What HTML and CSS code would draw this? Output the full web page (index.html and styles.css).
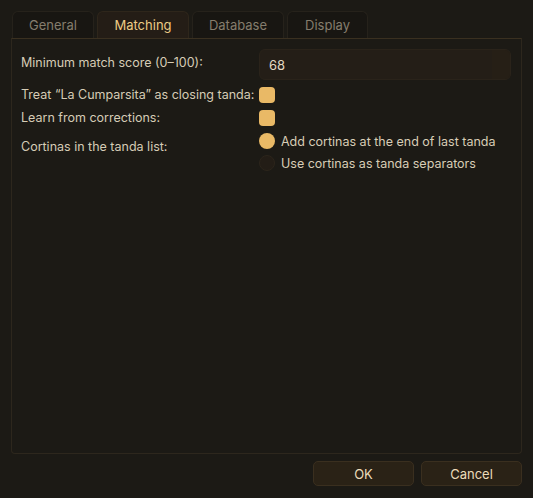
FILE: index.html
```html
<!DOCTYPE html>
<html>
<head>
<meta charset="utf-8">
<link rel="stylesheet" href="styles.css">
</head>
<body>
<div class="dialog">
  <div class="tabs">
    <div class="tab">General</div>
    <div class="tab active">Matching</div>
    <div class="tab">Database</div>
    <div class="tab">Display</div>
  </div>
  <div class="pane">
    <div class="form">
      <div class="label l-spin">Minimum match score (0–100):</div>
      <div class="spin"><span class="spin-val">68</span><span class="spin-btn"></span></div>

      <div class="label l-check">Treat “La Cumparsita” as closing tanda:</div>
      <div class="field-check"><span class="check"></span></div>

      <div class="label l-check">Learn from corrections:</div>
      <div class="field-check"><span class="check"></span></div>

      <div class="label l-radio">Cortinas in the tanda list:</div>
      <div class="radios">
        <div class="radio-row"><span class="radio on"></span><span class="radio-text">Add cortinas at the end of last tanda</span></div>
        <div class="radio-row"><span class="radio"></span><span class="radio-text">Use cortinas as tanda separators</span></div>
      </div>
    </div>
  </div>
  <div class="buttons">
    <button class="btn">OK</button>
    <button class="btn">Cancel</button>
  </div>
</div>
</body>
</html>
```

FILE: styles.css
```css
html, body {
  margin: 0;
  padding: 0;
  background: #1c1a15;
  width: 533px;
  height: 498px;
  overflow: hidden;
  font-family: Inter, "Noto Sans", sans-serif;
  font-size: 12.5px;
  color: #d8cdb6;
}

.dialog {
  display: flex;
  flex-direction: column;
  padding: 11px 11px 0 11px;
  height: 498px;
  box-sizing: border-box;
}

.tabs {
  display: flex;
  gap: 3px;
  padding-left: 1px;
  height: 27px;
}

.tab {
  box-sizing: border-box;
  height: 27px;
  padding: 0 18px;
  display: flex;
  align-items: center;
  justify-content: center;
  border: 1px solid #26221b;
  border-bottom: none;
  border-radius: 6px 6px 0 0;
  background: #181612;
  color: #857d6d;
  font-size: 13px;
}

.tab:nth-child(1) { width: 82px; }
.tab:nth-child(2) { width: 92px; }
.tab:nth-child(3) { width: 92px; }
.tab:nth-child(4) { width: 81px; }

.tab.active {
  background: #241d16;
  border-color: #2e261b;
  color: #eccb85;
}

.pane {
  box-sizing: border-box;
  width: 511px;
  height: 416px;
  border: 1px solid #2d271d;
  border-top-color: #3a3020;
  border-radius: 0 0 4px 4px;
  padding: 10px 10px 0 9px;
}

.form {
  display: grid;
  grid-template-columns: 238px 1fr;
  column-gap: 0;
  align-items: start;
}

.label {
  color: #d6ccb5;
  white-space: nowrap;
}

.l-spin {
  height: 31px;
  line-height: 27px;
}

.spin {
  box-sizing: border-box;
  height: 31px;
  background: #241e17;
  border: 1px solid #2a231a;
  border-radius: 6px;
  display: flex;
  align-items: center;
  overflow: hidden;
}

.spin-val {
  flex: 1;
  padding-left: 9px;
  color: #e2d8c2;
  font-size: 13px;
}

.spin-btn {
  width: 18px;
  height: 100%;
  background: #261f16;
}

.l-check {
  margin-top: 7px;
  height: 16px;
  line-height: 16px;
}

.field-check {
  margin-top: 7px;
  height: 16px;
  display: flex;
  align-items: center;
}

.check {
  display: block;
  width: 16px;
  height: 16px;
  box-sizing: border-box;
  border-radius: 4px;
  background: #e9b966;
}

.l-radio {
  margin-top: 13px;
  line-height: 16px;
}

.radios {
  margin-top: 7px;
  display: flex;
  flex-direction: column;
  gap: 6px;
}

.radio-row {
  display: flex;
  align-items: center;
  height: 16px;
  gap: 6px;
}

.radio {
  display: block;
  width: 16px;
  height: 16px;
  box-sizing: border-box;
  border-radius: 50%;
  background: #231d16;
  border: 1px solid #2c251b;
}

.radio.on {
  background: #e9b966;
  border: none;
}

.radio-text {
  color: #d8cdb6;
}

.buttons {
  display: flex;
  justify-content: flex-end;
  gap: 7px;
  padding-top: 7px;
  width: 511px;
}

.btn {
  box-sizing: border-box;
  width: 101px;
  height: 25px;
  border: 1px solid #3a2f1f;
  border-radius: 5px;
  background: #2a2216;
  color: #ecdcba;
  font-family: Inter, "Noto Sans", sans-serif;
  font-size: 13px;
  padding: 0;
}
```
